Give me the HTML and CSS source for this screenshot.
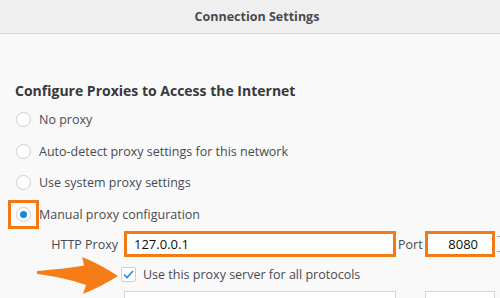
FILE: index.html
```html
<!DOCTYPE html>
<html>
<head>
<meta charset="utf-8">
<link rel="stylesheet" href="styles.css">
</head>
<body>
<div class="window">
  <div class="titlebar">Connection Settings</div>
  <div class="content">
    <h1 class="heading">Configure Proxies to Access the Internet</h1>
    <div class="radio-row"><span class="radio"></span><span class="label">No proxy</span></div>
    <div class="radio-row"><span class="radio"></span><span class="label">Auto-detect proxy settings for this network</span></div>
    <div class="radio-row"><span class="radio"></span><span class="label">Use system proxy settings</span></div>
    <div class="radio-row"><span class="radio checked"><span class="highlight radio-hl"></span></span><span class="label">Manual proxy configuration</span></div>
    <div class="proxy-row">
      <span class="field-label">HTTP Proxy</span>
      <span class="input host hl">127.0.0.1</span>
      <span class="field-label port-label">Port</span>
      <span class="input port hl">8080</span>
      <span class="spinner"></span>
    </div>
    <div class="check-row">
      <svg class="arrow" width="84" height="38" viewBox="0 0 84 38">
        <path d="M0 14 C18 12.5, 32 11, 47 8.5 C46.5 5.5, 46 3, 45 0 C58 5, 70 12, 81 19 C70 26, 58 32, 46 37 C47 34, 48 31, 49 28 C32 22, 16 19, 0 17 Z" fill="#f57c17"/>
      </svg>
      <span class="checkbox"><svg width="11" height="9" viewBox="0 0 11 9"><path d="M1 4.5 L4 7.5 L10 1" fill="none" stroke="#2a8ad8" stroke-width="1.6"/></svg></span>
      <span class="label">Use this proxy server for all protocols</span>
    </div>
    <div class="proxy-row next">
      <span class="field-label"></span>
      <span class="input host plain"></span>
      <span class="field-label port-label"></span>
      <span class="input port plain"></span>
    </div>
  </div>
</div>
</body>
</html>
```
FILE: styles.css
```css
html, body {
  margin: 0;
  padding: 0;
}
body {
  width: 500px;
  height: 298px;
  overflow: hidden;
  background: #f9f9fa;
  font-family: "Open Sans", "Liberation Sans", sans-serif;
  color: #4a4a4f;
}
.window {
  width: 500px;
}
.titlebar {
  height: 33px;
  line-height: 33px;
  background: #efeff0;
  border-bottom: 1px solid #d7d7db;
  text-align: center;
  font-size: 12.5px;
  font-weight: 700;
  padding-left: 14px;
  color: #4a4a4f;
}
.content {
  padding-left: 15px;
  position: relative;
}
.heading {
  margin: 47px 0 0 0;
  font-size: 14px;
  line-height: 20px;
  font-weight: 700;
  color: #38383d;
}
.radio-row {
  display: flex;
  align-items: center;
  height: 31.5px;
}
.heading + .radio-row {
  margin-top: 3px;
}
.radio {
  position: relative;
  width: 15px;
  height: 15px;
  border: 1px solid #cfcfd3;
  border-radius: 50%;
  background: #fff;
  margin-left: 1px;
  margin-right: 8px;
  box-sizing: border-box;
  display: flex;
  align-items: center;
  justify-content: center;
}
.radio.checked::after {
  content: "";
  width: 7px;
  height: 7px;
  border-radius: 50%;
  background: #1a88db;
}
.label {
  font-size: 12.5px;
  color: #4a4a4f;
}
.highlight {
  position: absolute;
  border: 3px solid #f27a14;
  box-sizing: border-box;
}
.radio-hl {
  left: -9px;
  top: -8px;
  width: 31px;
  height: 29px;
}
.proxy-row {
  display: flex;
  align-items: center;
  margin-top: 1px;
  height: 26px;
}
.field-label {
  width: 109px;
  font-size: 12.5px;
  text-align: right;
  padding-right: 6px;
  box-sizing: border-box;
  flex: none;
}
.port-label {
  width: 29px;
  text-align: left;
  padding: 0 0 0 2px;
}
.input {
  box-sizing: border-box;
  height: 26px;
  background: #fff;
  font-size: 13px;
  color: #0c0c0d;
  display: flex;
  align-items: center;
  flex: none;
}
.input.hl {
  border: 3px solid #f27a14;
}
.host {
  width: 272px;
  padding-left: 7px;
}
.port {
  width: 70px;
  justify-content: flex-end;
  padding-right: 14px;
}
.spinner {
  width: 6px;
  height: 14px;
  border-top: 1px solid #999;
  border-bottom: 1px solid #999;
  margin-left: 2px;
}
.check-row {
  position: relative;
  display: flex;
  align-items: center;
  height: 34px;
  padding-left: 106px;
}
.checkbox {
  width: 15px;
  height: 15px;
  box-sizing: border-box;
  border: 1px solid #cfcfd3;
  border-radius: 2px;
  background: #fff;
  margin-right: 7px;
  display: flex;
  align-items: center;
  justify-content: center;
}
.arrow {
  position: absolute;
  left: 22px;
  top: 0;
}
.next {
  margin-top: 0;
}
.input.plain {
  border: 1px solid #d7d7db;
}
```
